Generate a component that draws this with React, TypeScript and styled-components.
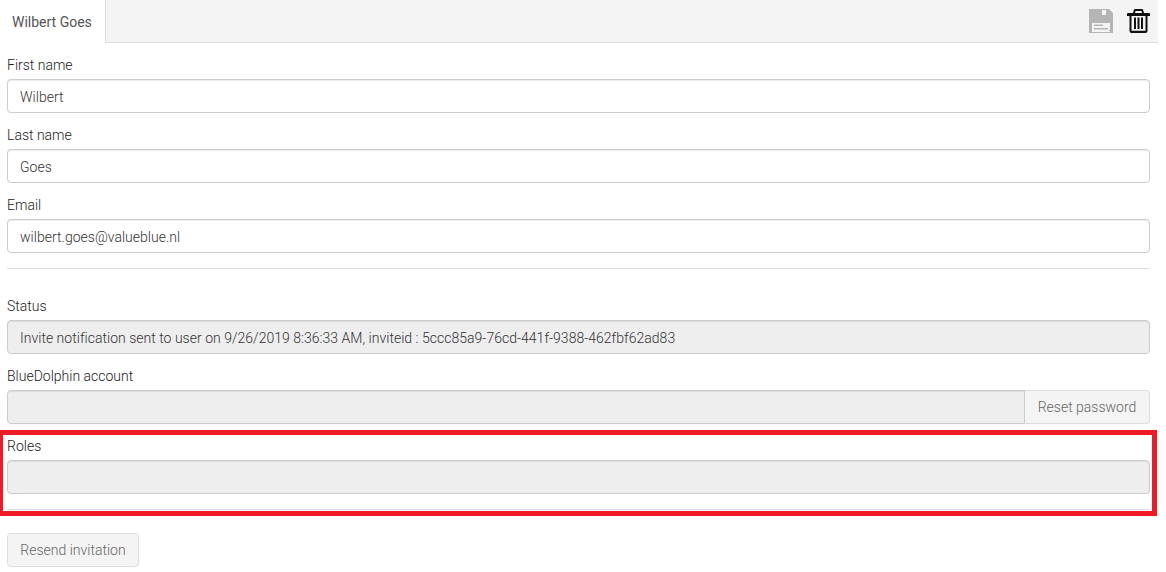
import React from "react";
import styled, { createGlobalStyle } from "styled-components";

const GlobalStyle = createGlobalStyle`
  html, body {
    margin: 0;
    padding: 0;
    background: #fff;
    font-family: Roboto, "Liberation Sans", sans-serif;
    font-size: 14px;
    font-weight: 300;
    color: #333;
  }
`;

const Page = styled.div`
  position: relative;
  width: 1158px;
  height: 572px;
  overflow: hidden;
`;

//
// tab bar
/////////////////////////////////////////////////////////////////////////////////
const TabBar = styled.div`
  height: 42px;
  display: flex;
  justify-content: space-between;
  background-color: #f4f4f4;
  border-bottom: 1px solid #ddd;
`;
const Tab = styled.div`
  width: 106px;
  height: 43px;
  box-sizing: border-box;
  padding-left: 12px;
  line-height: 44px;
  font-weight: 400;
  color: #555;
  background-color: #fff;
  border-right: 1px solid #ddd;
`;
const TabActions = styled.div`
  display: flex;
  gap: 14px;
  padding: 9px 8px 0 0;
`;

//
// form
/////////////////////////////////////////////////////////////////////////////////
const Form = styled.div`
  padding: 0 8px 0 7px;
`;
const Field = styled.div`
  display: grid;
  gap: 6px;
  padding-top: 14px;
`;
const Label = styled.label`
  height: 16px;
  line-height: 16px;
  color: #222;
`;
const Input = styled.div<{ $disabled?: boolean; $joined?: boolean }>`
  flex: 1;
  height: 34px;
  box-sizing: border-box;
  padding: 0 12px;
  line-height: 34px;
  letter-spacing: 0.02px;
  color: #333;
  background-color: ${(props) => (props.$disabled ? "#eee" : "#fff")};
  border: 1px solid #ccc;
  border-radius: ${(props) => (props.$joined ? "4px 0 0 4px" : "4px")};
  box-shadow: inset 0 1px 1px rgba(0, 0, 0, 0.075);
`;
const InputGroup = styled.div`
  display: flex;
`;
const GroupButton = styled.div`
  width: 125px;
  height: 34px;
  box-sizing: border-box;
  text-align: center;
  line-height: 33px;
  color: #666;
  background-color: #f4f4f4;
  border: 1px solid #ddd;
  border-left: 0;
  border-radius: 0 4px 4px 0;
`;
const Divider = styled.hr<{ $gapBelow: number }>`
  height: 1px;
  margin: 15px 0 ${(props) => props.$gapBelow}px;
  border: 0;
  background-color: #ddd;
`;
const ActionButton = styled.div`
  width: 132px;
  height: 34px;
  box-sizing: border-box;
  text-align: center;
  line-height: 33px;
  color: #666;
  background-color: #f4f4f4;
  border: 1px solid #ddd;
  border-radius: 4px;
`;

// annotation drawn over the roles field
const Highlight = styled.div`
  position: absolute;
  left: -2px;
  top: 430px;
  width: 1159px;
  height: 86px;
  box-sizing: border-box;
  border: 5px solid #ed1c24;
  pointer-events: none;
`;

const SaveIcon = () => (
  <svg width="24" height="24" viewBox="0 0 24 24">
    <path
      fill="#b5b5b5"
      fillRule="evenodd"
      d="M0 0H20L24 4V24H0ZM13 1V6H17V1ZM3 14V23H21V14Z"
    />
    <path fill="#b5b5b5" d="M5 15.5H14V17H5ZM5 19H19V20.5H5ZM20 21H21V22H20Z" />
  </svg>
);

const TrashIcon = () => (
  <svg width="23" height="24" viewBox="0 0 23 24">
    <path
      fill="#111"
      fillRule="evenodd"
      d="M6 4 7 0.5Q7.2 0 8 0H15Q15.8 0 16 0.5L17 4H22Q23 4 23 5V7H20.5V22Q20.5 24 18.5 24H4.5Q2.5 24 2.5 22V7H0V5Q0 4 1 4ZM8 4H15L14.5 2H8.5ZM4.5 7V21.8H18.5V7Z"
    />
    <path fill="#111" d="M7 8.5H9V20H7ZM10.5 8.5H12.5V20H10.5ZM14 8.5H16V20H14Z" />
  </svg>
);

const App = () => {
  return (
    <Page>
      <GlobalStyle />
      <TabBar>
        <Tab>Wilbert Goes</Tab>
        <TabActions>
          <SaveIcon />
          <TrashIcon />
        </TabActions>
      </TabBar>
      <Form>
        <Field>
          <Label>First name</Label>
          <Input>Wilbert</Input>
        </Field>
        <Field>
          <Label>Last name</Label>
          <Input>Goes</Input>
        </Field>
        <Field>
          <Label>Email</Label>
          <Input>wilbert.goes@valueblue.nl</Input>
        </Field>
        <Divider $gapBelow={15} />
        <Field>
          <Label>Status</Label>
          <Input $disabled>
            Invite notification sent to user on 9/26/2019 8:36:33 AM, inviteid :
            5ccc85a9-76cd-441f-9388-462fbf62ad83
          </Input>
        </Field>
        <Field>
          <Label>BlueDolphin account</Label>
          <InputGroup>
            <Input $disabled $joined />
            <GroupButton>Reset password</GroupButton>
          </InputGroup>
        </Field>
        <Field>
          <Label>Roles</Label>
          <Input $disabled />
        </Field>
        <Divider $gapBelow={23} />
        <ActionButton>Resend invitation</ActionButton>
      </Form>
      <Highlight />
    </Page>
  );
};

export default App;
